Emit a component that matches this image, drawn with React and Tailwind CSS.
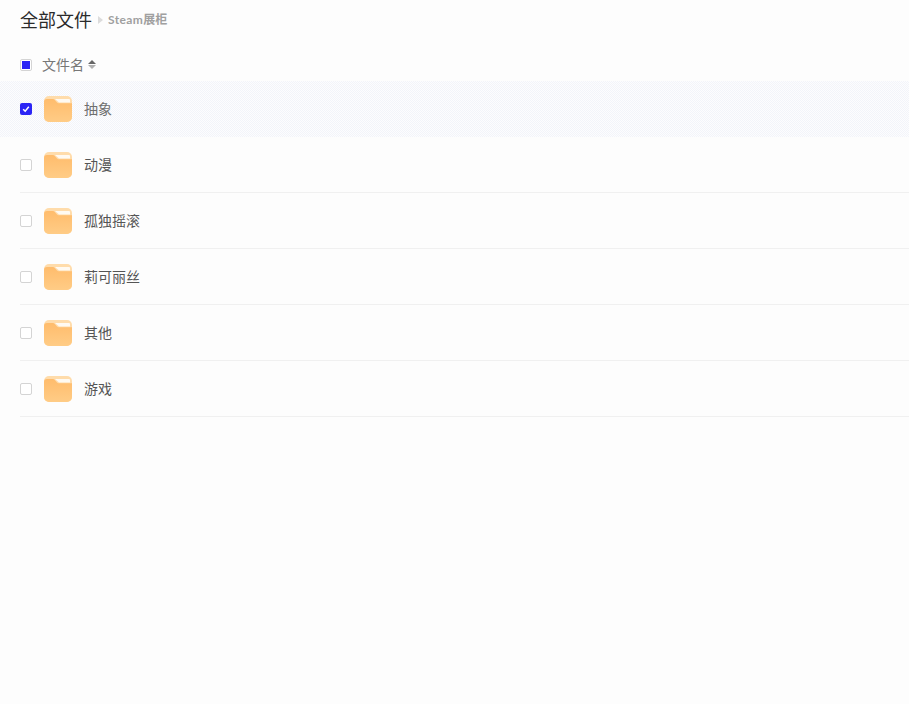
const FONT = { fontFamily: '"Lato","Noto Sans CJK SC",sans-serif' };

function FolderIcon({ id }) {
  return (
    <svg width="28" height="26" viewBox="0 0 28 26" className="shrink-0 block">
      <defs>
        <linearGradient id={id} x1="0" y1="0" x2="0" y2="1">
          <stop offset="0" stopColor="#ffbc6c" />
          <stop offset="1" stopColor="#ffcc86" />
        </linearGradient>
      </defs>
      <rect x="0" y="0" width="28" height="26" rx="5" fill="#ffdcab" />
      <path d="M11 3 H25 a1 1 0 0 1 1 1 V6.5 H15 Z" fill="#fffaf2" />
      <path d="M0 6 a3 3 0 0 1 3 -3 H9 a2 2 0 0 1 1.5 .7 L13 6.6 a2 2 0 0 0 1.5 .6 H28 V21 a5 5 0 0 1 -5 5 H5 a5 5 0 0 1 -5 -5 Z" fill={`url(#${id})`} />
    </svg>
  );
}

function Check({ checked }) {
  return (
    <span className={checked
      ? "w-3 h-3 rounded-[2px] bg-[#2b25f5] flex items-center justify-center shrink-0"
      : "w-3 h-3 rounded-[2px] border border-[#d4d4d4] bg-white shrink-0"}>
      {checked && (
        <svg width="8" height="8" viewBox="0 0 8 8">
          <path d="M1.2 4.2 L3.2 6.2 L6.8 1.8" stroke="#fff" strokeWidth="1.5" fill="none" />
        </svg>
      )}
    </span>
  );
}

function Row({ name, selected, id }) {
  return (
    <div className={selected
      ? "h-14 flex bg-[conic-gradient(#f2f4fa_25%,#fdfdfe_0_50%,#f2f4fa_0_75%,#fdfdfe_0)] bg-[length:2px_2px]"
      : "h-14 flex"}>
      <div className={selected
        ? "flex-1 ml-5 flex items-center"
        : "flex-1 ml-5 flex items-center border-b border-[#f0f0f0]"}>
        <Check checked={selected} />
        <div className="ml-3"><FolderIcon id={id} /></div>
        <span className={selected ? "ml-3 text-sm text-[#6e6e6e]" : "ml-3 text-sm text-[#555555]"}>{name}</span>
      </div>
    </div>
  );
}

export default function App() {
  const rows = ["抽象", "动漫", "孤独摇滚", "莉可丽丝", "其他", "游戏"];
  return (
    <div className="w-[909px] h-[704px] bg-[#fdfdfd] overflow-hidden" style={FONT}>
      <div className="h-10 pl-5 flex items-center">
        <span className="text-lg leading-6 text-[#2b2b2b]">全部文件</span>
        <span className="ml-[6px] w-0 h-0 border-y-[4px] border-y-transparent border-l-[5px] border-l-[#dcdcdc]"></span>
        <span className="ml-[5px] text-xs font-bold text-[#a0a0a0]"><span className="tracking-[0.4px]">Steam</span>展柜</span>
      </div>
      <div className="h-[41px] pl-5 pt-2 flex items-center">
        <span className="w-3 h-3 rounded-[2px] border border-[#d4d4d4] bg-white flex items-center justify-center">
          <span className="w-2 h-2 bg-[#2b25f5]"></span>
        </span>
        <span className="ml-[10px] text-sm text-[#777777]">文件名</span>
        <span className="ml-1 flex flex-col gap-[1px]">
          <span className="w-0 h-0 border-x-4 border-x-transparent border-b-4 border-b-[#666666]"></span>
          <span className="w-0 h-0 border-x-4 border-x-transparent border-t-4 border-t-[#b0b0b0]"></span>
        </span>
      </div>
      {rows.map((n, i) => <Row key={n} name={n} id={`f${i}`} selected={i === 0} />)}
    </div>
  );
}
